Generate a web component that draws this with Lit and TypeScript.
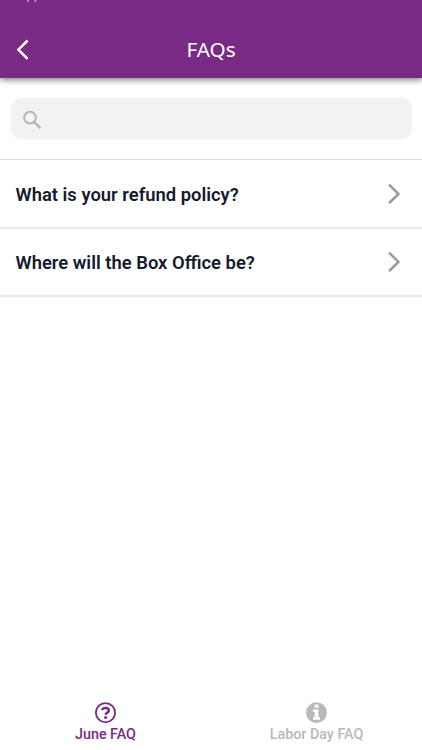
import { LitElement, html, css, svg } from "lit";
import { customElement, state } from "lit/decorators.js";
import { classMap } from "lit/directives/class-map.js";

const questions = ["What is your refund policy?", "Where will the Box Office be?"];

const helpIcon = svg`
  <circle cx="10.5" cy="10.7" r="9.6" fill="none" stroke="currentColor" stroke-width="1.8"/>
  <path d="M6.9 8.1C7.6 6.5 8.8 5.9 10.5 5.9c2 0 3.4 1 3.4 2.6 0 2.2-3.2 2-3.2 4.2" fill="none" stroke="currentColor" stroke-width="2.5"/>
  <circle cx="10.6" cy="15.5" r="1.6" fill="currentColor"/>`;

const infoIcon = svg`
  <path transform="translate(-.5 -.3)" fill="currentColor" fill-rule="evenodd" d="M11 .6a10.4 10.4 0 1 1 0 20.8A10.4 10.4 0 0 1 11 .6ZM9.2 2.8v3.2h3.7V2.8ZM7.5 7.9v2.4h1.7v5.3H7.5v2.5h7v-2.5h-1.6V7.9Z"/>`;

const tabs = [
  { label: "June FAQ", icon: helpIcon },
  { label: "Labor Day FAQ", icon: infoIcon },
];

@customElement("app-root")
export class AppRoot extends LitElement {
  @state() private active = 0;

  static styles = css`
    :host {
      display: flex;
      flex-direction: column;
      height: 750px;
      overflow: hidden;
      background: #fff;
      font-family: Roboto, sans-serif;
    }
    svg { display: block; }
    header {
      position: relative;
      flex: none;
      height: 78px;
      box-sizing: border-box;
      padding-top: 22px;
      background: #792a84;
      box-shadow: 0 2px 6px rgba(0, 0, 0, 0.5);
      color: #fff;
      display: grid;
      grid-template-columns: 60px 1fr 60px;
      align-items: center;
    }
    .origin {
      position: absolute;
      left: 18px;
      top: -14px;
      font-size: 13px;
      line-height: 18px;
      color: #d9b8de;
    }
    .back { padding-left: 15px; }
    h1 {
      margin: 0;
      padding-bottom: 2px;
      text-align: center;
      font: 400 20.7px/28px "Noto Sans", sans-serif;
    }
    .search {
      flex: none;
      height: 41px;
      margin: 20px 10.5px;
      box-sizing: border-box;
      padding: 12px 0 0 11.5px;
      border-radius: 10px;
      background: #f0f2f4;
      color: #b4b5b7;
    }
    .list { flex: 1; }
    .row {
      height: 68px;
      box-sizing: border-box;
      border-top: 1px solid #dededf;
      padding: 1px 20px 0 15.5px;
      display: flex;
      align-items: center;
      justify-content: space-between;
      color: #151a2d;
      font-size: 18.42px;
      font-weight: 600;
    }
    .row + .row { border-top: 2px solid #e9e9ea; padding-top: 0; }
    .row:last-child { height: 70px; border-bottom: 2px solid #e9e9ea; }
    .row svg { color: #999; }
    nav {
      flex: none;
      height: 58px;
      box-sizing: border-box;
      border-top: 1px solid #fcfcfc;
      display: grid;
      grid-template-columns: 1fr 1fr;
    }
    .tab {
      display: flex;
      flex-direction: column;
      align-items: center;
      padding-top: 9px;
      color: #b9b9b9;
      font-size: 14.3px;
      line-height: 20px;
      font-weight: 500;
    }
    .tab.active { color: #792a84; }
  `;

  render() {
    return html`
      <header>
        <span class="origin">App Store</span>
        <svg class="back" width="16" height="22" viewBox="0 0 16 22" fill="none" stroke="currentColor" stroke-width="2.5">
          <path d="M12.6 1.5 3.4 10.7l9.2 9.2"/>
        </svg>
        <h1>FAQs</h1>
      </header>
      <div class="search">
        <svg width="20" height="20" viewBox="0 0 20 20" fill="none" stroke="currentColor" stroke-width="2">
          <circle cx="8" cy="7.6" r="5.9"/><path d="m12.2 12 6.2 6.2" stroke-width="2.4"/>
        </svg>
      </div>
      <div class="list">
        ${questions.map((q) => html`
          <div class="row">
            <span>${q}</span>
            <svg width="15" height="22" viewBox="0 0 15 22" fill="none" stroke="currentColor" stroke-width="2.5">
              <path d="m2.1 1.6 9.3 9.3-9.3 9.3"/>
            </svg>
          </div>`)}
      </div>
      <nav>
        ${tabs.map((t, i) => html`
          <div class=${classMap({ tab: true, active: i === this.active })} @click=${() => (this.active = i)}>
            <svg width="22" height="22" viewBox="0 0 22 22">${t.icon}</svg>
            <span>${t.label}</span>
          </div>`)}
      </nav>`;
  }
}
